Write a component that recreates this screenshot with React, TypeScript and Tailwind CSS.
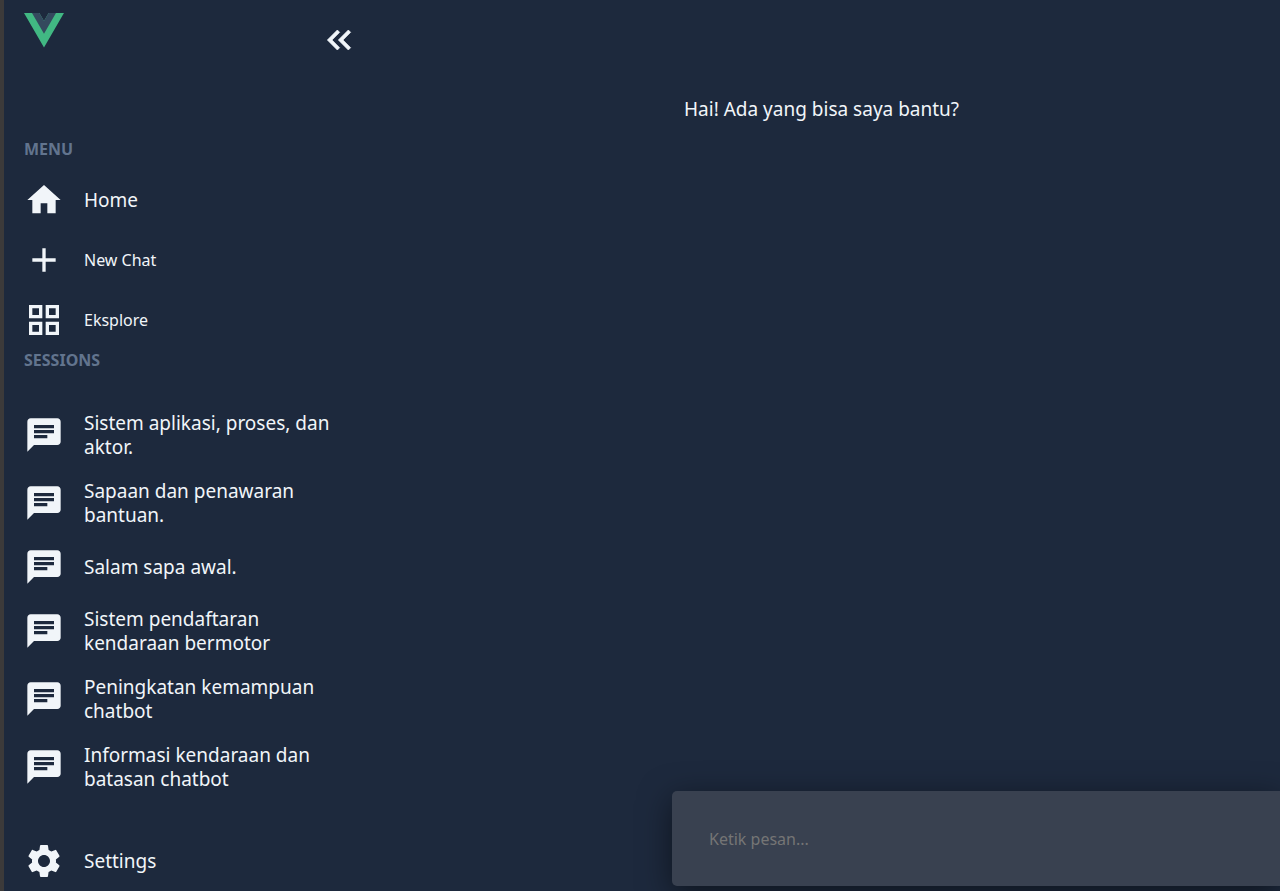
import { useState } from "react";
import type { ReactNode } from "react";
import { MdAdd, MdChat, MdGridView, MdHome, MdSettings } from "react-icons/md";

const sessions = [
  "Sistem aplikasi, proses, dan aktor.",
  "Sapaan dan penawaran bantuan.",
  "Salam sapa awal.",
  "Sistem pendaftaran kendaraan bermotor",
  "Peningkatan kemampuan chatbot",
  "Informasi kendaraan dan batasan chatbot",
];

function Logo() {
  return (
    <svg viewBox="0 0 262 227" className="w-10 self-start" role="img" aria-label="Vue">
      <path fill="#41b883" d="M161.1 0 130.9 52.4 100.7 0H0l130.9 226.7L261.8 0z" />
      <path fill="#34495e" d="M161.1 0 130.9 52.4 100.7 0H52.3l78.6 136L209.4 0z" />
    </svg>
  );
}

function DoubleArrowLeft() {
  return (
    <svg viewBox="0 0 24 24" className="size-10" fill="currentColor" stroke="currentColor" strokeWidth="0.4" aria-hidden="true">
      <path d="M17.59 18 19 16.59 14.42 12 19 7.41 17.59 6l-6 6z" />
      <path d="m11 18 1.41-1.41L7.83 12l4.58-4.59L11 6l-6 6z" />
    </svg>
  );
}

function NavLink({ icon, children, small }: { icon: ReactNode; children: ReactNode; small?: boolean }) {
  return (
    <a href="#" className="flex items-center gap-5 py-[10px]">
      <span className="shrink-0 text-[40px]">{icon}</span>
      <span className={small ? "text-base leading-6" : "text-[19px] leading-6"}>{children}</span>
    </a>
  );
}

function Heading({ children }: { children: ReactNode }) {
  return <h2 className="text-base leading-5 font-bold text-slate-500 uppercase">{children}</h2>;
}

export default function App() {
  const [message, setMessage] = useState("");
  return (
    <div className="flex min-h-screen overflow-hidden border-l-4 border-[#3c3a3a] bg-slate-800 font-['Noto_Sans',sans-serif] text-slate-100">
      <aside className="flex w-[375px] shrink-0 flex-col px-5">
        <header className="flex justify-between pt-[13px]">
          <Logo />
          <button type="button" aria-label="Collapse sidebar" className="mt-[7px]">
            <DoubleArrowLeft />
          </button>
        </header>
        <nav className="mt-[79px] flex flex-col">
          <Heading>Menu</Heading>
          <div className="mt-[11px] flex flex-col">
            <NavLink icon={<MdHome />}>Home</NavLink>
            <NavLink icon={<MdAdd />} small>New Chat</NavLink>
            <NavLink icon={<MdGridView />} small>Eksplore</NavLink>
          </div>
          <Heading>Sessions</Heading>
          <div className="mt-[31px] flex flex-col pr-4">
            {sessions.map((title) => (
              <NavLink key={title} icon={<MdChat />}>{title}</NavLink>
            ))}
          </div>
        </nav>
        <div className="mt-auto">
          <NavLink icon={<MdSettings />}>Settings</NavLink>
        </div>
      </aside>
      <main className="flex min-w-0 flex-1 flex-col justify-between pt-[97px] pb-[5px] pl-[293px]">
        <p className="pl-3 text-[19px] leading-6">Hai! Ada yang bisa saya bantu?</p>
        <form
          onSubmit={(event) => event.preventDefault()}
          className="rounded-l-[5px] bg-[#394150] shadow-[0_8px_32px_rgba(0,0,0,0.5)]"
        >
          <input
            type="text"
            aria-label="Ketik pesan"
            placeholder="Ketik pesan..."
            value={message}
            onChange={(event) => setMessage(event.target.value)}
            className="h-[95px] w-full bg-transparent px-[37px] text-base outline-none placeholder:text-[#757575]"
          />
        </form>
      </main>
    </div>
  );
}
